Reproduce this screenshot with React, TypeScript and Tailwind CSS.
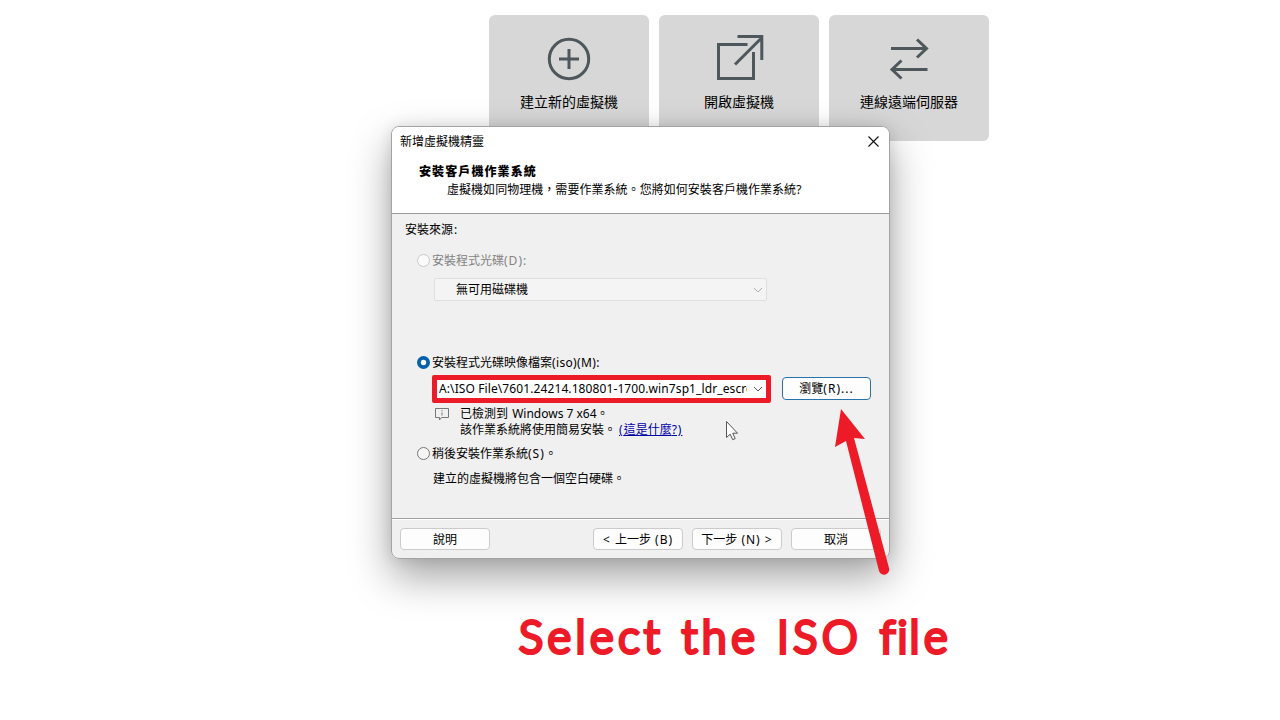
import type { ReactNode } from "react";

function ActionCard({ label, children }: { label: string; children: ReactNode }) {
  return (
    <button className="flex h-[126px] w-40 flex-col items-center rounded-md bg-[#d7d7d7] pt-[18px] text-sm leading-5 text-black">
      <svg className="h-[52px] w-[60px] flex-none" viewBox="0 0 60 52" fill="none" stroke="#4d575c" strokeWidth="3">
        {children}
      </svg>
      <span className="mt-[7px] whitespace-nowrap">{label}</span>
    </button>
  );
}

function WizardButton({ children, className = "" }: { children: ReactNode; className?: string }) {
  return (
    <button className={`flex h-[22px] w-[90px] items-center justify-center whitespace-pre rounded-[4px] border border-[#cbcbcb] bg-[#fdfdfd] pt-[2px] ${className}`}>
      {children}
    </button>
  );
}

function Key({ children }: { children: ReactNode }) {
  return <span className="tracking-[1px]">{children}</span>;
}

function Radio({ state = "off" }: { state?: "off" | "on" | "disabled" }) {
  return (
    <svg className="mb-px h-[13px] w-[13px] flex-none" viewBox="0 0 13 13">
      {state === "on" ? (
        <>
          <circle cx="6.5" cy="6.5" r="6.5" fill="#0560ac" />
          <circle cx="6.5" cy="6.5" r="2.7" fill="#fff" />
        </>
      ) : (
        <circle cx="6.5" cy="6.5" r="6" fill={state === "disabled" ? "#fafafa" : "#f5f5f5"} stroke={state === "disabled" ? "#c8c8c8" : "#777"} />
      )}
    </svg>
  );
}

function Chevron({ color }: { color: string }) {
  return (
    <svg className="h-[6px] w-[10px] flex-none" viewBox="0 0 10 6" fill="none" stroke={color}>
      <path d="M1 1l4 4 4-4" />
    </svg>
  );
}

function Wizard() {
  return (
    <section className="absolute left-[391px] top-[126px] flex h-[433px] w-[499px] flex-col overflow-hidden rounded-lg border border-[#a3a3a3] bg-[#f0f0f0] text-xs leading-4 text-black">
      <header className="h-[87px] flex-none border-b border-[#9c9c9c] bg-white">
        <div className="flex h-[30px] items-center justify-between pl-2 pr-[10px]">
          <span>新增虛擬機精靈</span>
          <svg className="mb-[2px] h-[11px] w-[11px]" viewBox="0 0 11 11" stroke="#111" strokeWidth="1.1">
            <path d="M.5.5l10 10M10.500.5l-10 10" />
          </svg>
        </div>
        <h1 className="ml-[27px] mt-[7px] font-black tracking-[1.1px]">安裝客戶機作業系統</h1>
        <p className="ml-[55px] mt-[2px] whitespace-nowrap tracking-[0.04px]">虛擬機如同物理機，需要作業系統。您將如何安裝客戶機作業系統?</p>
      </header>
      <div className="h-[305px] flex-none border-b border-[#a0a0a0] pl-[13px] pt-[8px]">
        <div>安裝來源<span className="pl-px">:</span></div>
        <div className="mt-[15px] flex items-center gap-[2px] pl-3 text-[#838383]">
          <Radio state="disabled" />
          <span>安裝程式光碟<Key>(D):</Key></span>
        </div>
        <div className="ml-[29px] mt-[9px] flex h-[23px] w-[333px] items-center justify-between rounded-[2px] border border-[#dfdfdf] bg-[#f4f4f4] pl-[21px] pr-[3px]">
          <span>無可用磁碟機</span>
          <Chevron color="#b0b0b0" />
        </div>
        <div className="mt-[54px] flex items-center gap-[2px] pl-3">
          <Radio state="on" />
          <span>安裝程式光碟映像檔案<span className="tracking-[0.35px]">(iso)(M):</span></span>
        </div>
        <div className="ml-[27px] mt-[4px] flex items-start gap-[11px]">
          <div className="flex h-[28px] w-[339px] items-center justify-between rounded-[2px] border-[5px] border-[#ec1b27] bg-white pl-[2px] pr-[3px]">
            <span className="w-[308px] overflow-hidden whitespace-nowrap pb-px tracking-[0.1px]">A:\ISO File\7601.24214.180801-1700.win7sp1_ldr_escro</span>
            <Chevron color="#555" />
          </div>
          <button className="mt-[2px] flex h-[23px] w-[89px] items-center justify-center rounded-[4px] border border-[#2674a9] bg-[#fdfdfd]">瀏覽<Key>(R)...</Key></button>
        </div>
        <div className="ml-[30px] mt-[3px] flex">
          <svg className="mt-[2px] h-[13px] w-[14px] flex-none" viewBox="0 0 14 13" fill="none" stroke="#777">
            <path d="M.5.500h13v9H6.500L4.500 12V9.500h-4zM7 4.500v3M7 2.200v1.200" />
          </svg>
          <div className="ml-[11px]">
            <div>已檢測到 <span className="pl-px">Windows 7 x64。</span></div>
            <div className="flex gap-[3px]">
              <span>該作業系統將使用簡易安裝。</span>
              <a className="text-[#0000a8] underline"><Key>(</Key>這是什麼<Key>?)</Key></a>
            </div>
          </div>
        </div>
        <div className="mt-[8px] flex items-center gap-[2px] pl-3">
          <Radio />
          <span>稍後安裝作業系統<Key>(S)</Key>。</span>
        </div>
        <div className="ml-[28px] mt-[9px]">建立的虛擬機將包含一個空白硬碟。</div>
      </div>
      <footer className="flex flex-1 items-start border-t border-white pl-2 pt-[8px]">
        <WizardButton>說明</WizardButton>
        <WizardButton className="ml-[103px]"><Key>{"< "}</Key>上一步<Key>{" (B)"}</Key></WizardButton>
        <WizardButton className="ml-[9px]">下一步<Key>{" (N) >"}</Key></WizardButton>
        <WizardButton className="ml-[9px]">取消</WizardButton>
      </footer>
    </section>
  );
}

export default function App() {
  return (
    <main className="relative flex h-[720px] w-[1280px] flex-col overflow-hidden bg-white font-['Noto_Sans','Noto_Sans_CJK_TC',sans-serif]">
      <div className="flex gap-[10px] pl-[489px] pt-[15px]">
        <ActionCard label="建立新的虛擬機">
          <circle cx="30" cy="26" r="19.700" />
          <path d="M20 26h20M30 16v20" />
        </ActionCard>
        <ActionCard label="開啟虛擬機">
          <path d="M38.500 11.500H9.500v34h35V19M26 31.500L53 4.500M28.500 3.500h24.300V27" />
        </ActionCard>
        <ActionCard label="連線遠端伺服器">
          <path d="M12 15.500h35M38 6.500l9.500 9-9.500 9M48.500 36.500H13M22.500 27.500l-9.500 9 9.500 9" />
        </ActionCard>
      </div>
      <div className="absolute left-[391px] top-[126px] h-[433px] w-[499px] rounded-lg shadow-[0_18px_40px_rgba(0,0,0,0.36),0_0_14px_rgba(0,0,0,0.1)]" />
      <Wizard />
      <p className="absolute left-[519px] top-[606px] whitespace-nowrap font-['Lato'] text-[45px] font-light leading-[60px] tracking-[4.6px] text-[#ec1b27] [-webkit-text-stroke:4px_#ec1b27] [stroke-linejoin:round] [word-spacing:1px]">
        Select the ISO <span className="tracking-[2px]">fi</span>le
      </p>
      <svg className="absolute left-[720px] top-[400px] h-[180px] w-[180px]" viewBox="720 400 180 180">
        <path d="M726.500 421.500v16l3.700-3.300 2.500 5.500 2.500-1.100-2.500-5.400h4.800z" fill="#fff" stroke="#555" />
        <path d="M841 409l-6 38 11-6 33 130a5 5 0 0 0 10-3L854 438l11 1z" fill="#ec1b27" />
      </svg>
    </main>
  );
}
